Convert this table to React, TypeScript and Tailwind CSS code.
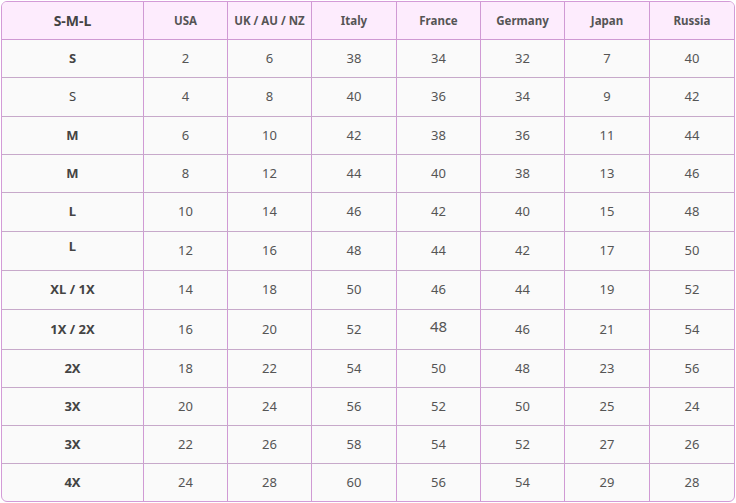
const columns = ["USA", "UK / AU / NZ", "Italy", "France", "Germany", "Japan", "Russia"];

type Row = {
  size: string;
  values: number[];
  height: string;
  plain?: boolean;
};

const rows: Row[] = [
  { size: "S", values: [2, 6, 38, 34, 32, 7, 40], height: "h-[38px]" },
  { size: "S", values: [4, 8, 40, 36, 34, 9, 42], height: "h-[39px]", plain: true },
  { size: "M", values: [6, 10, 42, 38, 36, 11, 44], height: "h-[38px]" },
  { size: "M", values: [8, 12, 44, 40, 38, 13, 46], height: "h-[38px]" },
  { size: "L", values: [10, 14, 46, 42, 40, 15, 48], height: "h-[39px]" },
  { size: "L", values: [12, 16, 48, 44, 42, 17, 50], height: "h-[39px]" },
  { size: "XL / 1X", values: [14, 18, 50, 46, 44, 19, 52], height: "h-[39px]" },
  { size: "1X / 2X", values: [16, 20, 52, 48, 46, 21, 54], height: "h-[40px]" },
  { size: "2X", values: [18, 22, 54, 50, 48, 23, 56], height: "h-[38px]" },
  { size: "3X", values: [20, 24, 56, 52, 50, 25, 24], height: "h-[38px]" },
  { size: "3X", values: [22, 26, 58, 54, 52, 27, 26], height: "h-[38px]" },
  { size: "4X", values: [24, 28, 60, 56, 54, 29, 28], height: "h-[37px]" },
];

const grid = "grid grid-cols-[142px_84px_84px_85px_84px_84px_85px_84px]";

export default function App() {
  return (
    <div className="min-h-[503px] bg-white pl-[1px] pt-[1px] font-['Noto_Sans','Open_Sans',sans-serif]">
      <div className="w-[734px] overflow-hidden rounded-[6px] border border-[#d39bd7] bg-[#fafafa]">
        {/* header */}
        <div className={`${grid} h-[38px] bg-[#fdecfd] border-b border-[#cf99d3]`}>
          <div className="flex items-center justify-center border-r border-[#d09ad4] text-[14px] font-bold text-[#444]">
            S-M-L
          </div>
          {columns.map((c, i) => (
            <div
              key={c}
              className={`flex items-center justify-center text-[11.5px] font-bold text-[#555] ${
                i < columns.length - 1 ? "border-r border-[#d09ad4]" : ""
              }`}
            >
              {c}
            </div>
          ))}
        </div>

        {rows.map((r, ri) => (
          <div
            key={ri}
            className={`${grid} ${r.height} ${
              ri < rows.length - 1 ? "border-b border-[#c7a9ca]" : ""
            }`}
          >
            <div
              className={`flex items-center justify-center border-r border-[#d09ad4] text-[13px] text-[#444] ${
                r.plain ? "font-normal" : "font-bold"
              }`}
            >
              <span className={ri === 5 ? "-translate-y-[4px]" : ""}>{r.size}</span>
            </div>
            {r.values.map((v, ci) => {
              const odd = ri === 7 && ci === 3;
              return (
                <div
                  key={ci}
                  className={`flex items-center justify-center text-[#555] ${
                    ci < r.values.length - 1 ? "border-r border-[#d09ad4]" : ""
                  }`}
                >
                  <span className={odd ? "-translate-y-[3px] text-[15px]" : "text-[13px]"}>{v}</span>
                </div>
              );
            })}
          </div>
        ))}
      </div>
    </div>
  );
}
